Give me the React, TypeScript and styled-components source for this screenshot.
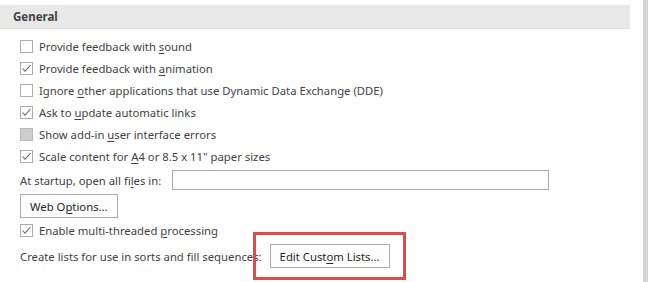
import React from 'react'
import styled, { createGlobalStyle } from 'styled-components'

const GlobalStyle = createGlobalStyle`
  html, body {
    margin: 0;
    padding: 0;
    background: #ffffff;
  }
  body {
    font-family: "Noto Sans", "Open Sans", sans-serif;
    font-size: 11.3px;
    color: #3f3f3f;
  }
`

const Page = styled.div`
  width: 648px;
  height: 282px;
  display: flex;
  overflow: hidden;
  background: #ffffff;
`

const Content = styled.div`
  width: 630px;
  padding-top: 5px;
  display: flex;
  flex-direction: column;
`

const Scrollbar = styled.div`
  width: 5px;
  margin-left: 13px;
  background: #d6d6d6;
`

const SectionHeader = styled.div`
  height: 23px;
  display: flex;
  align-items: center;
  padding-left: 13px;
  background: #e8e8e8;
  border-bottom: 1px solid #dedede;
  font-weight: bold;
  font-size: 11.5px;
  color: #444444;
`

const Options = styled.div`
  display: flex;
  flex-direction: column;
  padding: 6px 0 0 20px;
`

const Row = styled.label<{ $gap?: number }>`
  height: 22px;
  margin-top: ${({ $gap }) => $gap || 0}px;
  display: flex;
  align-items: center;
  gap: 6px;
  white-space: nowrap;
`

const Box = styled.span<{ $disabled?: boolean }>`
  width: 13px;
  height: 13px;
  box-sizing: border-box;
  border: 1px solid ${({ $disabled }) => ($disabled ? '#b9b9b9' : '#acacac')};
  background: ${({ $disabled }) => ($disabled ? '#cccccc' : '#ffffff')};
  display: flex;
  align-items: center;
  justify-content: center;
  flex-shrink: 0;
`

const Key = styled.span`
  text-decoration: underline;
  text-underline-offset: 2px;
`

const FieldRow = styled.div`
  height: 22px;
  margin-top: 2px;
  display: flex;
  align-items: center;
  gap: 11px;
  white-space: nowrap;
`

const PathInput = styled.div`
  width: 377px;
  height: 20px;
  box-sizing: border-box;
  border: 1px solid #ababab;
  background: #ffffff;
`

const Button = styled.button`
  height: 24px;
  padding: 0 9px;
  box-sizing: border-box;
  border: 1px solid #acacac;
  background: #fdfdfd;
  font-family: inherit;
  font-size: 11.3px;
  color: #262626;
  cursor: default;
`

const ButtonRow = styled.div`
  padding-top: 3px;
  display: flex;
`

const ListRow = styled.div`
  height: 24px;
  margin-top: 3px;
  display: flex;
  align-items: center;
  gap: 8px;
  white-space: nowrap;
`

const Highlight = styled.span`
  position: relative;
  display: inline-flex;

  &::after {
    content: '';
    position: absolute;
    top: -12px;
    bottom: -12px;
    left: -17px;
    right: -16px;
    border: 3px solid #e34a45;
    pointer-events: none;
  }
`

const Check = () => (
  <svg width="11" height="11" viewBox="0 0 11 11">
    <polyline points="1.5,5.5 4,8.2 9.5,2" fill="none" stroke="#6e6e6e" strokeWidth="1.1" />
  </svg>
)

type OptionProps = { checked?: boolean; disabled?: boolean; gap?: number; children: React.ReactNode }

const Option = ({ checked, disabled, gap, children }: OptionProps) => (
  <Row $gap={gap}>
    <Box $disabled={disabled}>{checked && <Check />}</Box>
    <span>{children}</span>
  </Row>
)

export default function App() {
  return (
    <Page>
      <GlobalStyle />
      <Content>
        <SectionHeader>General</SectionHeader>
        <Options>
          <Option>
            Provide feedback with <Key>s</Key>ound
          </Option>
          <Option checked>
            Provide feedback with <Key>a</Key>nimation
          </Option>
          <Option>
            Ignore <Key>o</Key>ther applications that use Dynamic Data Exchange (DDE)
          </Option>
          <Option checked>
            Ask to <Key>u</Key>pdate automatic links
          </Option>
          <Option disabled>
            Show add-in <Key>u</Key>ser interface errors
          </Option>
          <Option checked>
            Scale content for <Key>A</Key>4 or 8.5 x 11" paper sizes
          </Option>
          <FieldRow>
            <span>
              At startup, open all fi<Key>l</Key>es in:
            </span>
            <PathInput />
          </FieldRow>
          <ButtonRow>
            <Button>
              Web O<Key>p</Key>tions...
            </Button>
          </ButtonRow>
          <Option checked gap={1}>
            Enable multi-threaded <Key>p</Key>rocessing
          </Option>
          <ListRow>
            <span>Create lists for use in sorts and fill sequences:</span>
            <Highlight>
              <Button>
                Edit Cust<Key>o</Key>m Lists...
              </Button>
            </Highlight>
          </ListRow>
        </Options>
      </Content>
      <Scrollbar />
    </Page>
  )
}
